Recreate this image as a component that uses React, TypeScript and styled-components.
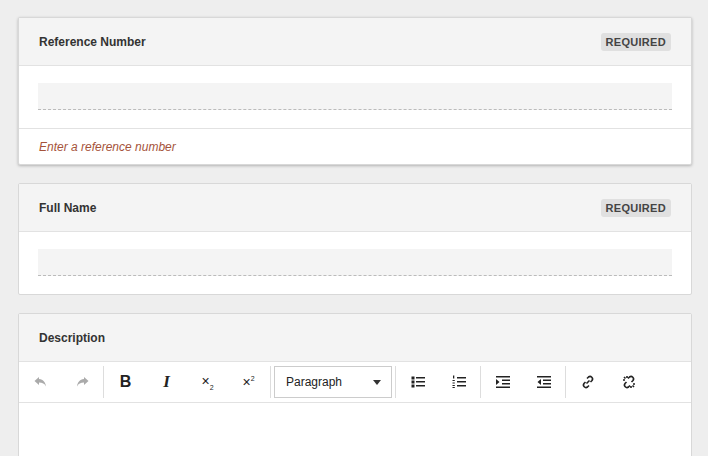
import styled, { createGlobalStyle } from "styled-components";

const Global = createGlobalStyle`
  body {
    margin: 0;
    background: #eeeeee;
    font-family: "Liberation Sans", Arial, sans-serif;
  }
`;

const Page = styled.div`
  padding: 17px 16px 0 18px;
  display: flex;
  flex-direction: column;
  gap: 18px;
  height: 456px;
  overflow: hidden;
  box-sizing: border-box;
`;

const Card = styled.div<{ $shadow?: boolean }>`
  background: #fff;
  border: 1px solid #d8d8d8;
  border-radius: 2px;
  box-shadow: ${({ $shadow }) => ($shadow ? "0 1px 3px rgba(0,0,0,0.25)" : "none")};
  flex-shrink: 0;
`;

const Header = styled.div`
  height: 47px;
  background: #f4f4f4;
  border-bottom: 1px solid #e2e2e2;
  display: flex;
  align-items: center;
  justify-content: space-between;
  padding: 0 20px;
`;

const Title = styled.div`
  font-size: 12px;
  font-weight: bold;
  color: #333;
`;

const Badge = styled.span`
  background: #e0e0e0;
  color: #444;
  font-size: 11px;
  font-weight: bold;
  padding: 3px 5px;
  border-radius: 3px;
  letter-spacing: 0.3px;
`;

const Body = styled.div`
  padding: 17px 19px 18px 19px;
`;

const Input = styled.input`
  display: block;
  width: 100%;
  box-sizing: border-box;
  height: 27px;
  background: #f4f4f4;
  border: none;
  border-bottom: 1px dashed #bbb;
  outline: none;
`;

const Footer = styled.div`
  border-top: 1px solid #e2e2e2;
  height: 35px;
  display: flex;
  align-items: center;
  padding: 0 20px;
  font-size: 12px;
  font-style: italic;
  color: #a5533a;
`;

const Toolbar = styled.div`
  height: 40px;
  border-bottom: 1px solid #e2e2e2;
  display: flex;
  align-items: stretch;
  padding-left: 1px;
`;

const Tool = styled.button<{ $disabled?: boolean }>`
  width: 41px;
  border: none;
  background: none;
  padding: 0;
  display: flex;
  align-items: center;
  justify-content: center;
  color: ${({ $disabled }) => ($disabled ? "#aaa" : "#222")};
  font-family: "Liberation Sans", Arial, sans-serif;
`;

const Sep = styled.div`
  width: 1px;
  background: #ddd;
  margin: 4px 1px;
`;

const Select = styled.div`
  width: 118px;
  margin: 4px 2px;
  border: 1px solid #ccc;
  display: flex;
  align-items: center;
  justify-content: space-between;
  padding: 0 10px 0 11px;
  font-size: 12px;
  color: #222;
  box-sizing: border-box;
`;

const Editor = styled.div`
  height: 60px;
`;

const Ico = ({ d, fill }: { d: string; fill?: boolean }) => (
  <svg width="16" height="16" viewBox="0 0 16 16" fill={fill ? "currentColor" : "none"} stroke={fill ? "none" : "currentColor"} strokeWidth="1.6">
    <path d={d} />
  </svg>
);

export default function App() {
  return (
    <>
      <Global />
      <Page>
        <Card $shadow>
          <Header>
            <Title>Reference Number</Title>
            <Badge>REQUIRED</Badge>
          </Header>
          <Body>
            <Input />
          </Body>
          <Footer>Enter a reference number</Footer>
        </Card>
        <Card>
          <Header>
            <Title>Full Name</Title>
            <Badge>REQUIRED</Badge>
          </Header>
          <Body>
            <Input />
          </Body>
        </Card>
        <Card>
          <Header>
            <Title>Description</Title>
          </Header>
          <Toolbar>
            <Tool $disabled><Ico fill d="M6 3L1.5 7 6 11V8.5c3.5 0 5.5 1 7 4-0.5-4-2.5-7-7-7.5z" /></Tool>
            <Tool $disabled><Ico fill d="M10 3l4.5 4L10 11V8.5c-3.5 0-5.5 1-7 4 .5-4 2.5-7 7-7.5z" /></Tool>
            <Sep />
            <Tool><span style={{ fontWeight: "bold", fontSize: 16 }}>B</span></Tool>
            <Tool><span style={{ fontStyle: "italic", fontFamily: "Liberation Serif", fontSize: 17, fontWeight: "bold" }}>I</span></Tool>
            <Tool><span style={{ fontSize: 14 }}>×<sub style={{ fontSize: 7 }}>2</sub></span></Tool>
            <Tool><span style={{ fontSize: 14 }}>×<sup style={{ fontSize: 7 }}>2</sup></span></Tool>
            <Sep />
            <Select>
              <span>Paragraph</span>
              <svg width="8" height="5"><path d="M0 0h8L4 5z" fill="#333" /></svg>
            </Select>
            <Sep />
            <Tool><Ico fill d="M1.5 2.5h3v3h-3zM1.5 6.5h3v3h-3zM1.5 10.5h3v3h-3zM6 3h9v1.6H6zM6 7h9v1.6H6zM6 11h9v1.6H6z" /></Tool>
            <Tool><Ico fill d="M2 1.5h1.3v3H2zM1.5 6h2.3v1h-2.3zM1.5 8.5h2.3v1h-2.3zM1.5 11h2.3v1h-2.3zM1.5 13h2.3v1h-2.3zM6 3h9v1.6H6zM6 7h9v1.6H6zM6 11h9v1.6H6z" /></Tool>
            <Sep />
            <Tool><Ico fill d="M1 2h14v1.6H1zM7 5.5h8v1.5H7zM7 9h8v1.5H7zM1 12.5h14v1.6H1zM1 5l3.5 3L1 11z" /></Tool>
            <Tool><Ico fill d="M1 2h14v1.6H1zM7 5.5h8v1.5H7zM7 9h8v1.5H7zM1 12.5h14v1.6H1zM5 5L1.5 8 5 11z" /></Tool>
            <Sep />
            <Tool><Ico d="M6.5 9.5l3-3M7 4.5l1.5-1.5a2.5 2.5 0 013.5 3.5L10.5 8M9 11.5L7.5 13A2.5 2.5 0 014 9.5L5.5 8" /></Tool>
            <Tool><Ico d="M7 4.5l1.5-1.5a2.5 2.5 0 013.5 3.5L10.5 8M9 11.5L7.5 13A2.5 2.5 0 014 9.5L5.5 8M3 3l1.5 1.5M2 6h2M6 2v2M13 13l-1.5-1.5M14 10h-2M10 14v-2" /></Tool>
          </Toolbar>
          <Editor />
        </Card>
      </Page>
    </>
  );
}
